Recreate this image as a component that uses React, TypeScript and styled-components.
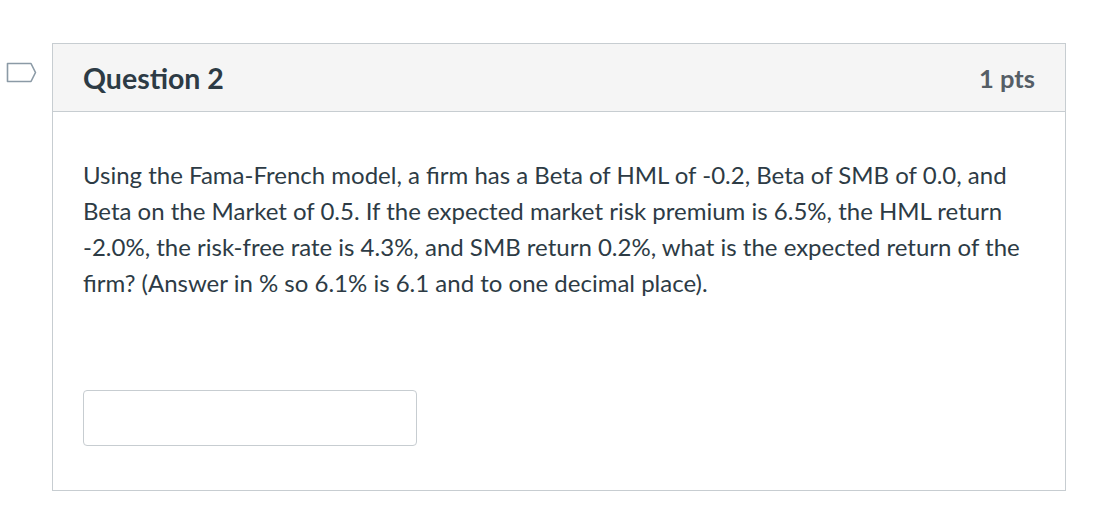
import React from 'react'
import styled, { createGlobalStyle } from 'styled-components'

const GlobalStyle = createGlobalStyle`
  html, body {
    margin: 0;
    padding: 0;
    background: #ffffff;
    font-family: Lato, "Liberation Sans", sans-serif;
    color: #2d3b45;
  }
`

const Page = styled.div`
  display: flex;
  align-items: flex-start;
  padding: 43px 0 0 6px;
`

const FlagColumn = styled.div`
  width: 46px;
  display: flex;
  padding-top: 19px;
`

const Card = styled.div`
  width: 1012px;
  border: 1px solid #c7cdd1;
  background: #fff;
`

const Header = styled.div`
  height: 67px;
  background: #f5f5f5;
  border-bottom: 1px solid #c7cdd1;
  display: flex;
  align-items: center;
  justify-content: space-between;
  padding: 0 30px 0 30px;
`

const Title = styled.h2`
  margin: 0;
  font-size: 28.5px;
  font-weight: 700;
  color: #2d3b45;
`

const Points = styled.div`
  font-size: 25.5px;
  font-weight: 700;
  color: #555e66;
`

const Body = styled.div`
  padding: 45px 30px 44px 30px;
`

const Text = styled.p`
  margin: 0;
  font-size: 24px;
  line-height: 36px;
  color: #2d3b45;
`

const AnswerInput = styled.input`
  display: block;
  box-sizing: border-box;
  margin-top: 89px;
  width: 334px;
  height: 56px;
  border: 1px solid #c7cdd1;
  border-radius: 4px;
  background: #fff;
`

const Flag = () => (
  <svg width="31" height="21" viewBox="0 0 31 21">
    <path d="M1.5 1.5 H25 L29.5 10.5 L25 19.5 H1.5 Z" fill="none" stroke="#8b9aa6" strokeWidth="1.6" strokeLinejoin="round" />
  </svg>
)

export default function App() {
  return (
    <>
      <GlobalStyle />
      <Page>
        <FlagColumn><Flag /></FlagColumn>
        <Card>
          <Header>
            <Title>Question 2</Title>
            <Points>1 pts</Points>
          </Header>
          <Body>
            <Text>
              Using the Fama-French model, a firm has a Beta of HML of -0.2, Beta of SMB of 0.0, and Beta on the Market of 0.5. If the expected market risk premium is 6.5%, the HML return -2.0%, the risk-free rate is 4.3%, and SMB return 0.2%, what is the expected return of the firm? (Answer in % so 6.1% is 6.1 and to one decimal place).
            </Text>
            <AnswerInput type="text" />
          </Body>
        </Card>
      </Page>
    </>
  )
}
